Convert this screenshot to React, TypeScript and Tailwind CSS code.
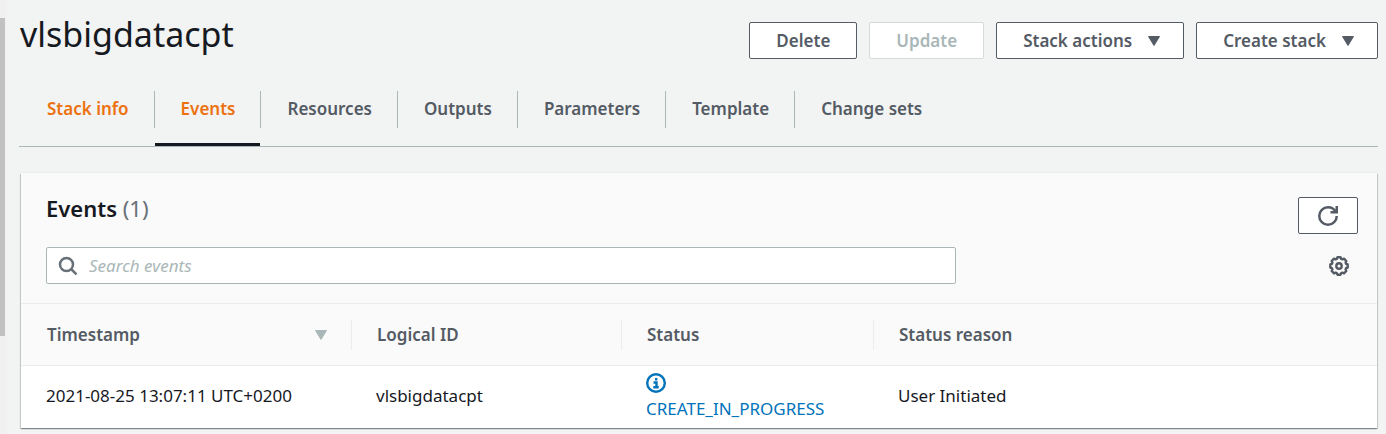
import React, { useState } from "react";

const tabs = ["Stack info", "Events", "Resources", "Outputs", "Parameters", "Template", "Change sets"];

const buttonBase =
  "flex h-[37px] cursor-pointer items-center justify-center rounded-xs border border-[#545b64] bg-white text-[17px] leading-6 font-semibold text-[#545b64] disabled:cursor-default disabled:border-[#d5dbdb] disabled:text-[#aab7b8]";

function Caret({ className }: { className: string }) {
  return (
    <svg viewBox="0 0 14 12" className={className} fill="currentColor" stroke="currentColor" strokeLinejoin="round" aria-hidden="true">
      <path d="M1.500 1.500h11L7 10.500z" />
    </svg>
  );
}

function RefreshIcon() {
  return (
    <svg viewBox="0 0 16 16" className="size-5" fill="none" stroke="currentColor" strokeWidth="2" aria-hidden="true">
      <path d="M10 5h5V0" />
      <path d="M15 8c0 3.900-3.100 7-7 7s-7-3.100-7-7 3.100-7 7-7c2.800 0 5.200 1.600 6.300 4" />
    </svg>
  );
}

function GearIcon() {
  return (
    <svg viewBox="0 0 20 20" className="size-5" fill="none" stroke="currentColor" strokeWidth="2.400" strokeLinejoin="round" aria-hidden="true">
      <path d="M8.400 1.300h3.200l.6 1.600 1.200.5 1.600-.7 2.300 2.300-.7 1.600.5 1.200 1.600.6v3.200l-1.600.6-.5 1.200.7 1.600-2.300 2.300-1.600-.7-1.200.5-.6 1.600H8.400l-.6-1.600-1.200-.5-1.600.7-2.300-2.300.7-1.600-.5-1.200-1.600-.6V8.400l1.600-.6.5-1.200-.7-1.600 2.300-2.300 1.600.7 1.200-.5z" />
      <circle cx="10" cy="10" r="2.700" />
    </svg>
  );
}

function SearchIcon() {
  return (
    <svg viewBox="0 0 20 20" className="size-5 shrink-0 text-[#687078]" fill="none" stroke="currentColor" strokeWidth="2.500" aria-hidden="true">
      <circle cx="8.500" cy="8.500" r="6.500" />
      <path d="M13 13l5.500 5.300" />
    </svg>
  );
}

function InfoIcon() {
  return (
    <svg viewBox="0 0 20 20" className="size-5" fill="none" stroke="currentColor" strokeWidth="2.400" aria-hidden="true">
      <circle cx="10" cy="10" r="8.800" />
      <path d="M10.200 5v2.600M7.500 9.500h3V14M7.300 14.200h5.400" />
    </svg>
  );
}

export default function App() {
  const [active, setActive] = useState("Events");
  const [query, setQuery] = useState("");

  return (
    <div className="flex h-screen bg-[#f2f3f3] font-['Noto_Sans','Open_Sans',sans-serif] text-[#16191f]">
      <div className="w-[7px] shrink-0 bg-[#f1f1f1] pt-[18px]">
        <div className="h-[318px] w-[5px] bg-[#c1c1c1]" />
      </div>

      <main className="min-w-0 grow pr-2 pl-3">
        <header className="flex items-start justify-between">
          <h1 className="pt-[14px] pl-px text-[34px] leading-10">vlsbigdatacpt</h1>
          <div className="flex gap-3 pt-[22px]">
            <button type="button" className={buttonBase + " px-[26px]"}>Delete</button>
            <button type="button" className={buttonBase + " px-[26px]"} disabled>Update</button>
            <button type="button" className={buttonBase + " pr-[22px] pl-[26px]"}>
              Stack actions
              <Caret className="ml-[15px] h-3 w-[14px]" />
            </button>
            <button type="button" className={buttonBase + " pr-[22px] pl-[26px]"}>
              Create stack
              <Caret className="ml-[15px] h-3 w-[14px]" />
            </button>
          </div>
        </header>

        <div role="tablist" className="mt-8 flex border-b border-[#aab7b8] pl-0.5">
          {tabs.map((tab) => (
            <div key={tab} className="group flex h-[55px]">
              <button
                type="button"
                role="tab"
                aria-selected={tab === active}
                onClick={() => setActive(tab)}
                className="cursor-pointer border-b-3 border-transparent pr-[25px] pb-4 pl-[26px] text-[17px] leading-6 font-semibold whitespace-nowrap text-[#545b64] group-first:text-[#ec7211] aria-selected:border-[#16191f] aria-selected:text-[#ec7211]"
              >
                {tab}
              </button>
              <span className="h-[37px] w-px bg-[#aab7b8] group-last:hidden" />
            </div>
          ))}
        </div>

        <section className="mr-px ml-0.5 mt-[26px] bg-white shadow-[0_1px_1px_0_rgba(0,28,36,0.3),1px_1px_1px_0_rgba(0,28,36,0.15),-1px_1px_1px_0_rgba(0,28,36,0.15),0_-1px_0_0_#eaeded]">
          <div className="bg-[#fafafa] pt-6 pr-[19px] pb-[19px] pl-[25px]">
            <div className="flex items-start justify-between">
              <h2 className="text-[22px] leading-[22px] font-semibold">
                Events <span className="font-normal text-[#687078]">(1)</span>
              </h2>
              <button type="button" aria-label="Refresh" className={buttonBase + " w-[60px]"}>
                <RefreshIcon />
              </button>
            </div>
            <div className="mt-[13px] flex items-center justify-between">
              <label className="flex h-[37px] w-[910px] items-center gap-[11px] rounded-xs border border-[#aab7b8] bg-white px-[11px]">
                <SearchIcon />
                <input
                  type="text"
                  aria-label="Search events"
                  placeholder="Search events"
                  value={query}
                  onChange={(e) => setQuery(e.target.value)}
                  className="w-full grow text-[17px] outline-none placeholder:text-[#aab7b8] placeholder:italic"
                />
              </label>
              <button type="button" aria-label="Preferences" className="mr-[9px] cursor-pointer text-[#545b64]">
                <GearIcon />
              </button>
            </div>
          </div>

          <table className="w-full table-fixed border-collapse text-left">
            <colgroup>
              <col className="w-[331px]" />
              <col className="w-[270px]" />
              <col className="w-[252px]" />
              <col />
            </colgroup>
            <thead className="border-y border-[#eaeded] bg-[#fafafa] text-[17px] leading-6 text-[#545b64]">
              <tr className="h-[62px]">
                <th className="p-0 font-semibold">
                  <div className="flex h-[30px] items-center justify-between border-r border-[#eaeded] pr-[23px] pl-[26px]">
                    Timestamp
                    <Caret className="h-3 w-[14px] text-[#aab7b8]" />
                  </div>
                </th>
                <th className="p-0 font-semibold">
                  <div className="flex h-[30px] items-center border-r border-[#eaeded] pl-[25px]">Logical ID</div>
                </th>
                <th className="p-0 font-semibold">
                  <div className="flex h-[30px] items-center border-r border-[#eaeded] pl-[25px]">Status</div>
                </th>
                <th className="p-0 font-semibold">
                  <div className="flex h-[30px] items-center pl-[25px]">Status reason</div>
                </th>
              </tr>
            </thead>
            <tbody className="text-[17px] leading-6">
              <tr className="h-[62px]">
                <td className="p-0 pb-0.5 pl-[25px]">2021-08-25 13:07:11 UTC+0200</td>
                <td className="p-0 pb-0.5 pl-6">vlsbigdatacpt</td>
                <td className="p-0 pl-6 text-[#0073bb]">
                  <InfoIcon />
                  <span className="block pt-1">CREATE_IN_PROGRESS</span>
                </td>
                <td className="p-0 pb-0.5 pl-6">User Initiated</td>
              </tr>
            </tbody>
          </table>
        </section>
      </main>
    </div>
  );
}
